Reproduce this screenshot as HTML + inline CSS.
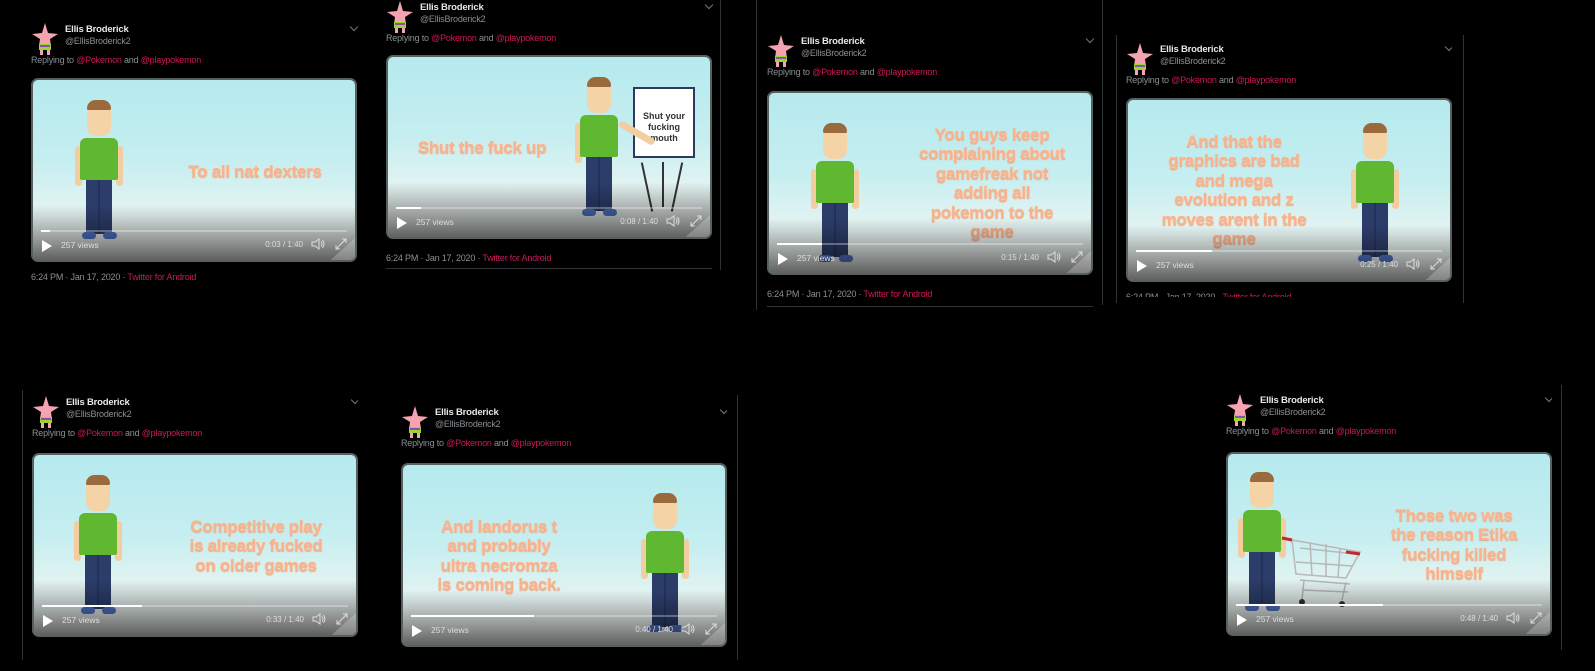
<!DOCTYPE html>
<html><head><meta charset="utf-8">
<style>
html,body{margin:0;padding:0;background:#000;width:1595px;height:671px;overflow:hidden;position:relative;font-family:"Liberation Sans",sans-serif;}
.card{position:absolute;width:326px;height:280px;}
.av{position:absolute;left:0;top:0;width:28px;height:34px;}
.nm{position:absolute;left:34px;top:2px;color:#e8e8e8;font-size:9.5px;font-weight:bold;letter-spacing:-0.2px}
.hd{position:absolute;left:34px;top:14px;color:#8a8f94;font-size:9px;letter-spacing:-0.2px}
.chev{position:absolute;right:0;top:2px;width:5px;height:5px;border-right:1px solid #777;border-bottom:1px solid #777;transform:rotate(45deg)}
.rp{position:absolute;left:0;top:33px;color:#8a8f94;font-size:9px;letter-spacing:-0.2px;white-space:nowrap}
.rp b{font-weight:normal;color:#d0175c}
.ts{position:absolute;left:0;color:#8a8f94;font-size:9px;white-space:nowrap;letter-spacing:-0.2px}
.ts b{font-weight:normal;color:#d0175c}
.vid{position:absolute;left:0;top:56px;width:322px;height:180px;border:2px solid #55605f;border-radius:7px;overflow:hidden;background:linear-gradient(#b5eaee 0%,#c6eef0 45%,#e6f4f2 75%,#f0f2ee 100%)}
.sh{position:absolute;left:0;right:0;bottom:0;height:55px;background:linear-gradient(rgba(0,0,0,0),rgba(0,0,0,.35) 60%,rgba(0,0,0,.6))}
.wm{position:absolute;right:-45px;bottom:-22px;width:120px;height:26px;background:rgba(255,255,255,.22);transform:rotate(-42deg)}
.bar{position:absolute;left:8px;right:8px;top:150px;height:2px;background:rgba(255,255,255,.3)}
.bar i{position:absolute;left:0;top:0;height:2px;background:#fff}
.play{position:absolute;left:9px;top:160px;width:0;height:0;border-left:10px solid #fff;border-top:6px solid transparent;border-bottom:6px solid transparent}
.vw{position:absolute;left:28px;top:160px;color:#ddd;font-size:8.5px}
.tm{position:absolute;right:52px;top:160px;color:#ddd;font-size:8px}
.vol{position:absolute;right:30px;top:158px}
.fs{position:absolute;right:8px;top:158px}
.tx{position:absolute;color:#f8b28c;font-weight:bold;font-size:17px;line-height:19.4px;text-align:center;white-space:nowrap;text-shadow:0 0 1px #fcd2b8,0 1px 1px #e8a07a;letter-spacing:-0.3px;transform:translateX(-50%)}
.man{position:absolute;top:22px;width:40px;height:140px;transform:translateX(-50%)}
.head{position:absolute;left:8px;top:0;width:24px;height:34px;background:#f4d3a6;border-radius:10px 10px 9px 9px}
.hair{position:absolute;left:8px;top:-2px;width:24px;height:10px;background:#9a6a3c;border-radius:10px 10px 2px 2px}
.shirt{position:absolute;left:1px;top:36px;width:38px;height:42px;background:#5fb830;border-radius:6px 6px 2px 2px}
.arm{position:absolute;top:44px;width:7px;height:40px;background:#f1cda0;border-radius:4px}
.pants{position:absolute;left:7px;top:78px;width:26px;height:54px;background:linear-gradient(90deg,#2c3d6a 45%,#1e2c52 50%,#2c3d6a 55%)}
.shoe{position:absolute;top:130px;width:14px;height:7px;background:#5275c8;border-radius:4px}
.vl{position:absolute;width:1px;background:#2f3336}
.hl{position:absolute;height:1px;background:#2f3336}
.short{height:245px;overflow:hidden}
</style></head><body>

<div class="vl" style="left:720px;top:0;height:270px"></div>
<div class="hl" style="left:386px;top:268px;width:326px"></div>
<div class="vl" style="left:756px;top:0;height:310px"></div>
<div class="hl" style="left:767px;top:306px;width:326px"></div>
<div class="vl" style="left:1102px;top:0;height:305px"></div>
<div class="vl" style="left:1116px;top:35px;height:268px"></div>
<div class="vl" style="left:1463px;top:35px;height:268px"></div>
<div class="vl" style="left:737px;top:395px;height:265px"></div>
<div class="vl" style="left:1561px;top:385px;height:265px"></div>
<div class="vl" style="left:22px;top:390px;height:270px"></div>

<svg width="0" height="0" style="position:absolute">
<defs>
<symbol id="pat" viewBox="0 0 28 34">
<path d="M14 1 L17 11 L27 12 L19 17 L20 24 L8 24 L9 17 L1 12 L11 11 Z" fill="#f5a3b0"/>
<rect x="8" y="22" width="12" height="6" fill="#9bd42b"/>
<rect x="9" y="23" width="10" height="2" fill="#8a4fb0"/>
<rect x="9" y="28" width="3" height="5" fill="#f5a3b0"/><rect x="16" y="28" width="3" height="5" fill="#f5a3b0"/>
</symbol>
<symbol id="vol" viewBox="0 0 14 12"><path d="M1 4h3l4-3v10l-4-3H1z M10 3.5q2 2.5 0 5 M11.5 2q3 4 0 8" fill="none" stroke="#ddd" stroke-width="1"/></symbol>
<symbol id="fs" viewBox="0 0 12 12"><path d="M1 11 L11 1 M7 1h4v4 M1 7v4h4" fill="none" stroke="#ddd" stroke-width="1"/></symbol>
</defs></svg>

<div class="card" style="left:31px;top:22px">
<svg class="av" viewBox="0 0 28 34"><use href="#pat"/></svg>
<div class="nm">Ellis Broderick</div><div class="hd">@EllisBroderick2</div><div class="chev"></div>
<div class="rp">Replying to <b>@Pokemon</b> and <b>@playpokemon</b></div>
<div class="vid">
<div class="man" style="left:66px"><div class="arm" style="left:-4px"></div><div class="arm" style="left:37px"></div><div class="shirt"></div><div class="pants"></div><div class="shoe" style="left:3px"></div><div class="shoe" style="left:24px"></div><div class="head"></div><div class="hair"></div></div>
<div class="tx" style="left:222px;top:82px">To all nat dexters</div>
<div class="sh"></div><div class="wm"></div>
<div class="bar"><i style="width:9px"></i></div><div class="play"></div><div class="vw">257 views</div><div class="tm">0:03 / 1:40</div>
<svg class="vol" width="14" height="12"><use href="#vol"/></svg><svg class="fs" width="12" height="12"><use href="#fs"/></svg>
</div>
<div class="ts" style="top:250px">6:24 PM · Jan 17, 2020 · <b>Twitter for Android</b></div>
</div>

<div class="card" style="left:386px;top:0px">
<svg class="av" viewBox="0 0 28 34"><use href="#pat"/></svg>
<div class="nm">Ellis Broderick</div><div class="hd">@EllisBroderick2</div><div class="chev"></div>
<div class="rp">Replying to <b>@Pokemon</b> and <b>@playpokemon</b></div>
<div class="vid" style="top:55px">
<div style="position:absolute;left:258px;top:105px;width:2px;height:50px;background:#333;transform:rotate(-12deg)"></div>
<div style="position:absolute;left:288px;top:105px;width:2px;height:50px;background:#333;transform:rotate(12deg)"></div>
<div style="position:absolute;left:274px;top:105px;width:2px;height:45px;background:#333"></div>
<div style="position:absolute;left:245px;top:30px;width:62px;height:71px;background:#fff;border:2px solid #2b3a5e;font:bold 9px 'Liberation Sans',sans-serif;color:#333;text-align:center;line-height:11px;padding-top:22px;box-sizing:border-box">Shut your<br>fucking<br>mouth</div>
<div class="man" style="left:211px"><div class="arm" style="left:-4px"></div><div class="arm" style="left:37px;transform:rotate(-60deg);transform-origin:top"></div><div class="shirt"></div><div class="pants"></div><div class="shoe" style="left:3px"></div><div class="shoe" style="left:24px"></div><div class="head"></div><div class="hair"></div></div>
<div class="tx" style="left:94px;top:81px">Shut the fuck up</div>
<div class="sh"></div><div class="wm"></div>
<div class="bar"><i style="width:25px"></i></div><div class="play"></div><div class="vw">257 views</div><div class="tm">0:08 / 1:40</div>
<svg class="vol" width="14" height="12"><use href="#vol"/></svg><svg class="fs" width="12" height="12"><use href="#fs"/></svg>
</div>
<div class="ts" style="top:253px">6:24 PM · Jan 17, 2020 · <b>Twitter for Android</b></div>
</div>

<div class="card" style="left:767px;top:34px;height:270px">
<svg class="av" viewBox="0 0 28 34"><use href="#pat"/></svg>
<div class="nm">Ellis Broderick</div><div class="hd">@EllisBroderick2</div><div class="chev"></div>
<div class="rp">Replying to <b>@Pokemon</b> and <b>@playpokemon</b></div>
<div class="vid" style="top:57px">
<div class="man" style="left:66px;top:32px"><div class="arm" style="left:-4px"></div><div class="arm" style="left:37px"></div><div class="shirt"></div><div class="pants"></div><div class="shoe" style="left:3px"></div><div class="shoe" style="left:24px"></div><div class="head"></div><div class="hair"></div></div>
<div class="tx" style="left:223px;top:32px">You guys keep<br>complaining about<br>gamefreak not<br>adding all<br>pokemon to the<br>game</div>
<div class="sh"></div><div class="wm"></div>
<div class="bar"><i style="width:45px"></i></div><div class="play"></div><div class="vw">257 views</div><div class="tm">0:15 / 1:40</div>
<svg class="vol" width="14" height="12"><use href="#vol"/></svg><svg class="fs" width="12" height="12"><use href="#fs"/></svg>
</div>
<div class="ts" style="top:255px">6:24 PM · Jan 17, 2020 · <b>Twitter for Android</b></div>
</div>

<div class="card" style="left:1126px;top:42px;height:255px;overflow:hidden">
<svg class="av" viewBox="0 0 28 34"><use href="#pat"/></svg>
<div class="nm">Ellis Broderick</div><div class="hd">@EllisBroderick2</div><div class="chev"></div>
<div class="rp">Replying to <b>@Pokemon</b> and <b>@playpokemon</b></div>
<div class="vid" style="top:56px">
<div class="man" style="left:247px;top:25px"><div class="arm" style="left:-4px"></div><div class="arm" style="left:37px"></div><div class="shirt"></div><div class="pants"></div><div class="shoe" style="left:3px"></div><div class="shoe" style="left:24px"></div><div class="head"></div><div class="hair"></div></div>
<div class="tx" style="left:106px;top:32px">And that the<br>graphics are bad<br>and mega<br>evolution and z<br>moves arent in the<br>game</div>
<div class="sh"></div><div class="wm"></div>
<div class="bar"><i style="width:76px"></i></div><div class="play"></div><div class="vw">257 views</div><div class="tm">0:25 / 1:40</div>
<svg class="vol" width="14" height="12"><use href="#vol"/></svg><svg class="fs" width="12" height="12"><use href="#fs"/></svg>
</div>
<div class="ts" style="top:250px">6:24 PM · Jan 17, 2020 · <b>Twitter for Android</b></div>
</div>

<div class="card short" style="left:32px;top:395px">
<svg class="av" viewBox="0 0 28 34"><use href="#pat"/></svg>
<div class="nm">Ellis Broderick</div><div class="hd">@EllisBroderick2</div><div class="chev"></div>
<div class="rp">Replying to <b>@Pokemon</b> and <b>@playpokemon</b></div>
<div class="vid" style="top:58px">
<div class="man" style="left:64px"><div class="arm" style="left:-4px"></div><div class="arm" style="left:37px"></div><div class="shirt"></div><div class="pants"></div><div class="shoe" style="left:3px"></div><div class="shoe" style="left:24px"></div><div class="head"></div><div class="hair"></div></div>
<div class="tx" style="left:222px;top:62px">Competitive play<br>is already fucked<br>on older games</div>
<div class="sh"></div><div class="wm"></div>
<div class="bar"><i style="width:100px"></i></div><div class="play"></div><div class="vw">257 views</div><div class="tm">0:33 / 1:40</div>
<svg class="vol" width="14" height="12"><use href="#vol"/></svg><svg class="fs" width="12" height="12"><use href="#fs"/></svg>
</div>
</div>

<div class="card short" style="left:401px;top:405px">
<svg class="av" viewBox="0 0 28 34"><use href="#pat"/></svg>
<div class="nm">Ellis Broderick</div><div class="hd">@EllisBroderick2</div><div class="chev"></div>
<div class="rp">Replying to <b>@Pokemon</b> and <b>@playpokemon</b></div>
<div class="vid" style="top:58px">
<div class="man" style="left:262px;top:30px"><div class="arm" style="left:-4px"></div><div class="arm" style="left:37px"></div><div class="shirt"></div><div class="pants"></div><div class="shoe" style="left:3px"></div><div class="shoe" style="left:24px"></div><div class="head"></div><div class="hair"></div></div>
<div class="tx" style="left:96px;top:52px">And landorus t<br>and probably<br>ultra necromza<br>is coming back.</div>
<div class="sh"></div><div class="wm"></div>
<div class="bar"><i style="width:123px"></i></div><div class="play"></div><div class="vw">257 views</div><div class="tm">0:40 / 1:40</div>
<svg class="vol" width="14" height="12"><use href="#vol"/></svg><svg class="fs" width="12" height="12"><use href="#fs"/></svg>
</div>
</div>

<div class="card short" style="left:1226px;top:393px">
<svg class="av" viewBox="0 0 28 34"><use href="#pat"/></svg>
<div class="nm">Ellis Broderick</div><div class="hd">@EllisBroderick2</div><div class="chev"></div>
<div class="rp">Replying to <b>@Pokemon</b> and <b>@playpokemon</b></div>
<div class="vid" style="top:59px">
<div class="man" style="left:34px;top:20px"><div class="arm" style="left:-4px"></div><div class="arm" style="left:37px"></div><div class="shirt"></div><div class="pants"></div><div class="shoe" style="left:3px"></div><div class="shoe" style="left:24px"></div><div class="head"></div><div class="hair"></div></div>
<svg style="position:absolute;left:52px;top:80px" width="90" height="80" viewBox="0 0 90 80"><path d="M2 4 L12 6 L16 40 L66 44 L80 18 L12 6 M20 14 L76 20 M16 28 L72 32 M30 8 L32 42 M46 10 L46 43 M60 14 L58 44 M20 46 L70 50 M22 56 L68 58 M24 46 L22 66 M66 48 L62 66" fill="none" stroke="#b8b8b8" stroke-width="1.5"/><path d="M2 4 L12 6 M66 18 L80 20" stroke="#c62828" stroke-width="3"/><circle cx="22" cy="68" r="3" fill="#333"/><circle cx="62" cy="70" r="3" fill="#333"/></svg>
<div class="tx" style="left:226px;top:52px">Those two was<br>the reason Etika<br>fucking killed<br>himself</div>
<div class="sh"></div><div class="wm"></div>
<div class="bar"><i style="width:147px"></i></div><div class="play"></div><div class="vw">257 views</div><div class="tm">0:48 / 1:40</div>
<svg class="vol" width="14" height="12"><use href="#vol"/></svg><svg class="fs" width="12" height="12"><use href="#fs"/></svg>
</div>
</div>

</body></html>
